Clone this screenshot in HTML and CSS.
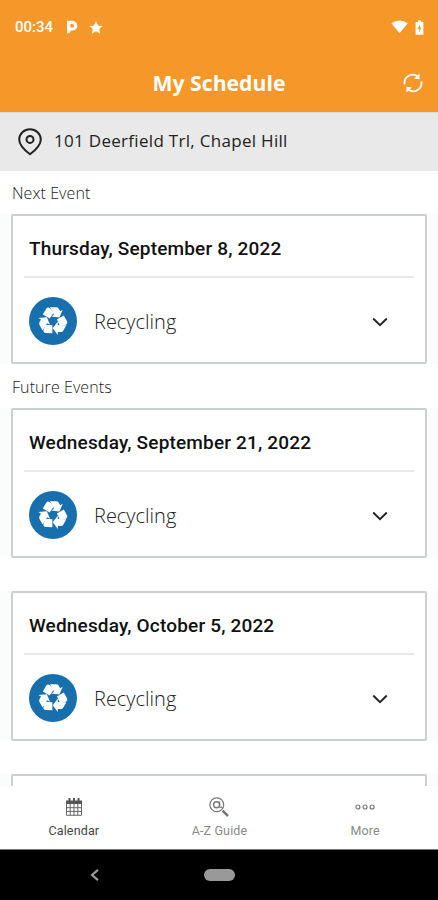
FILE: index.html
```html
<!DOCTYPE html>
<html lang="en">
<head>
<meta charset="utf-8">
<title>My Schedule</title>
<link rel="stylesheet" href="styles.css">
</head>
<body>
<svg class="defs" width="0" height="0" aria-hidden="true">
  <defs>
    <g id="arrow">
      <path d="M-10.2-6.6-6.8-12.2Q-5.9-13.6-4.6-13.5-2.8-13.3.6-8.3L-3.3-2.6Z"/>
      <path d="M-3-13.7H3Q4.8-13.7 5.6-12.4L7.2-9.7 9.8-11.2 6.4-3.4-1.7-4.4 1-6.2Z"/>
    </g>
    <symbol id="recycle" viewBox="-15 -15 30 30">
      <use href="#arrow"/>
      <use href="#arrow" transform="rotate(120)"/>
      <use href="#arrow" transform="rotate(240)"/>
    </symbol>
    <symbol id="chevron" viewBox="0 0 16 10">
      <path d="M1.2 1.5 8 8.2 14.8 1.5" fill="none" stroke="#222" stroke-width="1.9"/>
    </symbol>
  </defs>
</svg>
<div class="app">
  <header class="header">
    <div class="status">
      <span class="time">00:34</span>
      <svg class="parking" width="12" height="14" viewBox="0 0 12 14"><path fill-rule="evenodd" d="M1 .8H6.4A4.9 4.9 0 0 1 6.4 10.6H4.6Q4.4 13.6 1 13.6ZM4.4 4V7.4H6.3A1.7 1.7 0 0 0 6.3 4Z" fill="#fff"/></svg>
      <svg class="star" width="14" height="13" viewBox="0 0 14 13"><path d="M7 0 9 4.4 13.6 4.9 10.2 8 11.2 12.7 7 10.3 2.8 12.7 3.8 8 .4 4.9 5 4.4Z" fill="#fff"/></svg>
      <svg class="wifi" width="17" height="14" viewBox="0 0 17 14"><path d="M.3 3.2Q8.5-2.2 16.7 3.2L8.5 13.3Z" fill="#fff"/></svg>
      <svg class="battery" width="9" height="15" viewBox="0 0 9 15"><path d="M.6 2H2.8V.3H6.2V2H8.4V14.7H.6Z" fill="#fff"/><path d="M5 4.2 2.6 8.8H4.2V12L6.5 7.4H5Z" fill="#f59729"/></svg>
    </div>
    <div class="titlebar">
      <h1>My Schedule</h1>
      <svg class="refresh" width="20" height="20" viewBox="0 0 20 20"><g fill="none" stroke="#fff" stroke-width="1.8"><path d="M1.6 11.5A8.4 8.4 0 0 1 14.6 3.2"/><path d="M18.4 8.5A8.4 8.4 0 0 1 5.4 16.8"/></g><path d="M16.6.6V6.2L11 5.6ZM3.4 19.4V13.8L9 14.4Z" fill="#fff"/></svg>
    </div>
  </header>
  <div class="address">
    <svg width="24" height="28" viewBox="0 0 24 28"><path d="M12 26.2Q1.2 18 1.2 11.4A10.8 10.2 0 0 1 22.8 11.4Q22.8 18 12 26.2Z" fill="none" stroke="#222" stroke-width="2"/><circle cx="12" cy="11.4" r="3.5" fill="none" stroke="#222" stroke-width="2"/></svg>
    <span>101 Deerfield Trl, Chapel Hill</span>
  </div>
  <main class="events">
    <h2>Next Event</h2>
    <div class="row"><article class="card">
      <h3>Thursday, September 8, 2022</h3>
      <div class="item"><span class="badge"><svg width="30" height="30"><use href="#recycle"/></svg></span><span class="name">Recycling</span><svg class="chev" width="16" height="10"><use href="#chevron"/></svg></div>
    </article></div>
    <h2 class="future">Future Events</h2>
    <div class="row"><article class="card">
      <h3>Wednesday, September 21, 2022</h3>
      <div class="item"><span class="badge"><svg width="30" height="30"><use href="#recycle"/></svg></span><span class="name">Recycling</span><svg class="chev" width="16" height="10"><use href="#chevron"/></svg></div>
    </article></div>
    <div class="row later"><article class="card">
      <h3>Wednesday, October 5, 2022</h3>
      <div class="item"><span class="badge"><svg width="30" height="30"><use href="#recycle"/></svg></span><span class="name">Recycling</span><svg class="chev" width="16" height="10"><use href="#chevron"/></svg></div>
    </article></div>
    <div class="row later"><article class="card"></article></div>
  </main>
  <nav class="tabs">
    <div class="tab active">
      <svg width="18" height="20" viewBox="0 0 18 20"><path d="M1 3.5H17V7H1Z" fill="#555"/><path d="M4.5 1V5M9 1V5M13.5 1V5" stroke="#555" stroke-width="2"/><path d="M1.5 6V18.3H16.5V6M5.2 7V18M9 7V18M12.8 7V18M1 10.7H17M1 14.4H17" fill="none" stroke="#666" stroke-width="1"/></svg>
      <span>Calendar</span>
    </div>
    <div class="tab">
      <svg width="20" height="20" viewBox="0 0 20 20"><g fill="none" stroke="#777"><circle cx="7.8" cy="7.8" r="6.9" stroke-width="1.2"/><circle cx="7.6" cy="7.8" r="3" stroke-width="1.4"/><path d="M10.6 4.6V9.6Q11.4 11.3 13 9.8" stroke-width="1.2"/><path d="M13.6 13.6 19 19" stroke-width="2.5"/></g></svg>
      <span>A-Z Guide</span>
    </div>
    <div class="tab">
      <svg width="20" height="20" viewBox="0 0 20 20"><g fill="none" stroke="#777" stroke-width="1.2"><circle cx="2.9" cy="10" r="2"/><circle cx="10" cy="10" r="2"/><circle cx="17.1" cy="10" r="2"/></g></svg>
      <span>More</span>
    </div>
  </nav>
  <div class="sysnav">
    <svg width="10" height="14" viewBox="0 0 10 14"><path d="M8 1.8 2 7 8 12.2" fill="none" stroke="#999" stroke-width="2.2"/></svg>
    <span class="pill"></span>
  </div>
</div>
</body>
</html>
```
FILE: styles.css
```css
* { box-sizing: border-box; margin: 0; }
body { background: #fff; font-family: "Open Sans", sans-serif; }
.defs { position: absolute; }
svg { display: block; flex: none; }
.app { width: 438px; height: 900px; display: flex; flex-direction: column; overflow: hidden; }
.header { height: 112px; background: #f59729; color: #fff; flex: none; }
.status { height: 54px; display: flex; align-items: center; padding: 0 14px 0 15px; }
.time { font: 500 15px/20px Roboto, sans-serif; width: 39px; margin-right: 12px; white-space: nowrap; }
.star { margin-left: 11px; }
.wifi { margin-left: auto; }
.battery { margin-left: 7px; }
.titlebar { height: 58px; display: grid; grid-template-columns: 1fr auto 1fr; align-items: center; padding-right: 15px; }
.titlebar h1 { grid-column: 2; font-size: 21.2px; line-height: 30px; font-weight: 700; margin-left: 15px; white-space: nowrap; }
.refresh { justify-self: end; }
.address { height: 59px; flex: none; background: #e9e9e9; border-top: 1px solid #ddd; display: flex; align-items: center; padding: 0 18px; gap: 12px; color: #222; font-size: 17px; letter-spacing: .3px; }
.address span { margin-top: -4px; }
.events { flex: 1; min-height: 0; overflow: hidden; }
.events h2 { height: 43px; padding-left: 12px; font-size: 16px; line-height: 44px; font-weight: 300; letter-spacing: .08px; color: #222; }
.events .future { height: 44px; line-height: 46px; }
.row { background: #fbfdfc; padding: 0 11px; }
.later { margin-top: 33px; }
.card { height: 150px; border: 2px solid #cbcfce; border-radius: 2px; background: #fff; padding: 0 11px; }
.card h3 { height: 62px; border-bottom: 2px solid #e8e8e8; padding-left: 5px; font: 500 19px/66px Roboto, sans-serif; letter-spacing: .17px; color: #111; white-space: nowrap; }
.item { height: 84px; padding: 1px 26px 0 5px; display: flex; align-items: center; }
.badge { width: 48px; height: 48px; border-radius: 50%; background: #176fae; display: grid; place-items: center; fill: #fff; margin-top: 1px; }
.name { margin-left: 17px; font-size: 20px; font-weight: 300; color: #222; margin-top: 2px; }
.chev { margin-left: auto; margin-top: 3px; }
.tabs { height: 63px; flex: none; background: #fff; display: grid; grid-template-columns: repeat(3, 1fr); padding: 11px 0 0 1px; }
.tab { display: flex; flex-direction: column; align-items: center; gap: 6px; font: 400 12.5px/16px Roboto, sans-serif; color: #8a8a8a; letter-spacing: .15px; }
.active { color: #444; }
.sysnav { height: 51px; flex: none; background: #000; border-top: 1px solid #777; display: flex; align-items: center; padding-left: 90px; }
.pill { width: 31px; height: 12px; border-radius: 6px; background: #999; margin-left: 104px; }
```
